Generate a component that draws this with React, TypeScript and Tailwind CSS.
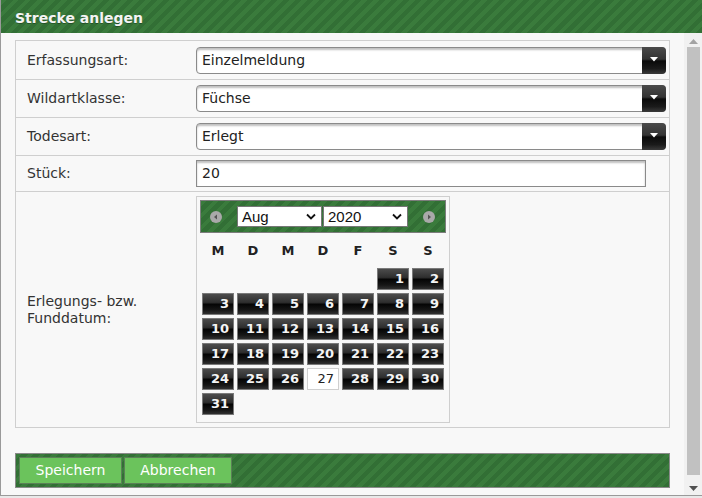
import React from "react";

const stripe =
  "bg-[image:repeating-linear-gradient(135deg,#3a7b3c_0px,#3a7b3c_4.2px,#326f35_4.2px,#326f35_8.5px)]";

function SelectBox({ value }: { value: string }) {
  return (
    <div className="relative flex h-[27px] w-[470px] items-center rounded-[4px] border border-[#8a8a8a] bg-white shadow-[inset_0_2px_2px_rgba(0,0,0,0.25)]">
      <span className="pl-[5px] text-[14px] text-[#222]">{value}</span>
      <div className="absolute -right-px -top-px flex h-[27px] w-[24px] justify-center rounded-r-[4px] bg-[image:linear-gradient(to_bottom,#4a4a4a_0%,#333_45%,#0a0a0a_52%,#1a1a1a_80%,#3a3a3a_100%)]">
        <svg width="8" height="5" viewBox="0 0 8 5" className="mt-[10px]">
          <path d="M0 0H8L4 4.5Z" fill="#fff" />
        </svg>
      </div>
    </div>
  );
}

function Row({
  label,
  children,
  h,
  first,
}: {
  label: React.ReactNode;
  children: React.ReactNode;
  h: string;
  first?: boolean;
}) {
  return (
    <div className={`flex items-center ${h} ${first ? "" : "border-t border-[#cfcfcf]"}`}>
      <div className="w-[180px] shrink-0 pl-[11px] text-[14px] leading-[17px] text-[#333]">{label}</div>
      <div className="flex">{children}</div>
    </div>
  );
}

function NavCircle({ dir }: { dir: "l" | "r" }) {
  return (
    <div className="flex h-[12px] w-[12px] items-center justify-center rounded-full bg-[#a9a9a9]">
      <svg width="6" height="6" viewBox="0 0 6 6">
        {dir === "l" ? <path d="M4 0.5V5.5L1 3Z" fill="#555" /> : <path d="M2 0.5V5.5L5 3Z" fill="#555" />}
      </svg>
    </div>
  );
}

function MiniSelect({ value, w }: { value: string; w: string }) {
  return (
    <div className={`flex h-[21px] ${w} items-center justify-between border border-[#767676] bg-white pl-[4px] pr-[5px]`}>
      <span className="text-[15px] leading-none text-[#111] [font-family:'Liberation_Sans',Arial,sans-serif]">{value}</span>
      <svg width="10" height="7" viewBox="0 0 10 7">
        <path d="M1 1.5L5 5.5L9 1.5" stroke="#111" strokeWidth="1.8" fill="none" />
      </svg>
    </div>
  );
}

function Calendar() {
  const cells: (number | null)[] = [null, null, null, null, null];
  for (let d = 1; d <= 31; d++) cells.push(d);
  const days = ["M", "D", "M", "D", "F", "S", "S"];
  return (
    <div className="flex h-[227px] w-[254px] flex-col border border-[#cfcfcf] bg-[#f8f8f8] p-[3px]">
      <div className={`flex h-[33px] items-center border border-[#7d7d7d] ${stripe}`}>
        <div className="ml-[9px]">
          <NavCircle dir="l" />
        </div>
        <div className="ml-[15px] flex gap-[1px]">
          <MiniSelect value="Aug" w="w-[85px]" />
          <MiniSelect value="2020" w="w-[85px]" />
        </div>
        <div className="ml-[15px]">
          <NavCircle dir="r" />
        </div>
      </div>
      <div className="ml-[2px] grid grid-cols-[repeat(7,32px)] gap-x-[3px]">
        {days.map((d, i) => (
          <div key={i} className="flex h-[35px] items-center justify-center text-[13px] font-bold text-[#222]">
            {d}
          </div>
        ))}
      </div>
      <div className="ml-[2px] grid grid-cols-[repeat(7,32px)] gap-x-[3px] gap-y-[3px]">
        {cells.map((d, i) =>
          d === null ? (
            <div key={i} className="h-[22px]" />
          ) : d === 27 ? (
            <div
              key={i}
              className="flex h-[22px] items-center justify-end border border-[#cfcfcf] bg-white pr-[4px] text-[13px] text-[#222]"
            >
              {d}
            </div>
          ) : (
            <div
              key={i}
              className="flex h-[22px] items-center justify-end border border-[#7a7a7a] bg-[image:linear-gradient(to_bottom,#4c4c4c_0%,#2e2e2e_42%,#050505_52%,#161616_80%,#303030_100%)] pr-[4px] text-[13px] font-bold text-[#f4f4f4]"
            >
              {d}
            </div>
          )
        )}
      </div>
    </div>
  );
}

export default function App() {
  return (
    <div className="h-[498px] w-[702px] overflow-hidden bg-[#e9e9e9] [font-family:'DejaVu_Sans',Verdana,sans-serif]">
      <div className="flex h-[496px] flex-col border-b border-l border-[#9a9a9a] bg-[#f8f8f8]">
        <div className={`flex h-[33px] shrink-0 items-center pl-[14px] pt-[3px] ${stripe}`}>
          <span className="text-[14px] font-bold text-[#f4f4f4] [text-shadow:0_1px_0_rgba(0,0,0,0.3)]">
            Strecke anlegen
          </span>
        </div>
        <div className="flex min-h-0 flex-1">
          <div className="flex flex-1 flex-col pl-[14px] pr-[14px] pt-[7px]">
            <div className="flex flex-col border border-[#cfcfcf]">
              <Row label="Erfassungsart:" h="h-[38px]" first>
                <SelectBox value="Einzelmeldung" />
              </Row>
              <Row label="Wildartklasse:" h="h-[38px]">
                <SelectBox value="Füchse" />
              </Row>
              <Row label="Todesart:" h="h-[38px]">
                <SelectBox value="Erlegt" />
              </Row>
              <Row label="Stück:" h="h-[36px]">
                <div className="flex h-[27px] w-[450px] items-center border border-[#8a8a8a] bg-white pl-[5px] text-[14px] text-[#222] shadow-[inset_0_2px_2px_rgba(0,0,0,0.25)]">
                  20
                </div>
              </Row>
              <Row
                label={
                  <>
                    Erlegungs- bzw.
                    <br />
                    Funddatum:
                  </>
                }
                h="h-[236px]"
              >
                <Calendar />
              </Row>
            </div>
            <div className={`mt-[25px] flex h-[35px] items-center gap-[2px] border border-[#8a8a8a] pl-[3px] ${stripe}`}>
              <button className="h-[27px] w-[103px] border border-[#5b7f57] bg-[#6bc35c] text-[14px] text-white">
                Speichern
              </button>
              <button className="h-[27px] w-[108px] border border-[#5b7f57] bg-[#6bc35c] text-[14px] text-white">
                Abbrechen
              </button>
            </div>
          </div>
          <div className="flex w-[18px] shrink-0 flex-col items-center bg-[#f1f1f1] pl-[1px] pt-[6px] pb-[4px]">
            <svg width="9" height="5" viewBox="0 0 9 5">
              <path d="M0 5H9L4.5 0Z" fill="#a3a3a3" />
            </svg>
            <div className="mt-[3px] w-[13px] flex-1 bg-[#c1c1c1]" />
            <div className="h-[11px]" />
            <svg width="9" height="5" viewBox="0 0 9 5">
              <path d="M0 0H9L4.5 5Z" fill="#505050" />
            </svg>
          </div>
        </div>
      </div>
    </div>
  );
}
